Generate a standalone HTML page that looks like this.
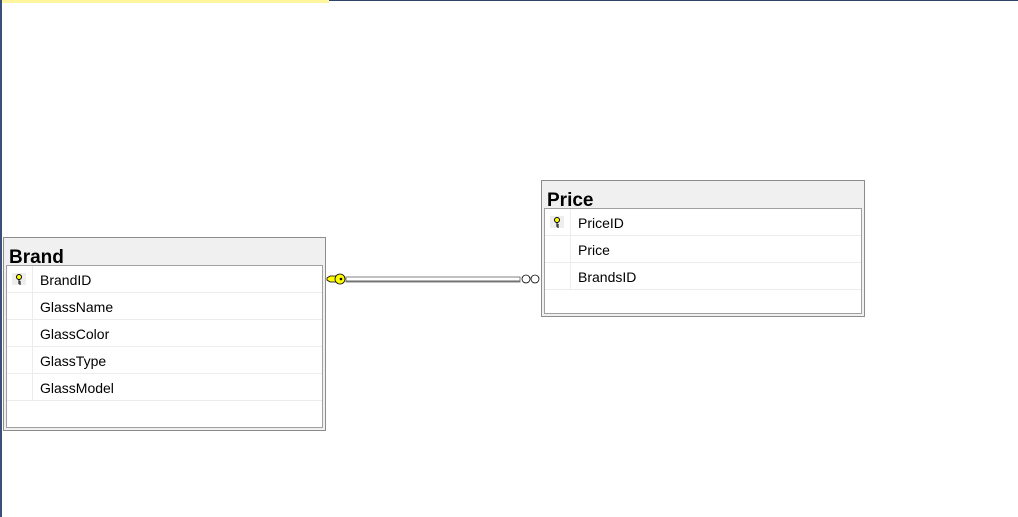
<!DOCTYPE html>
<html><head><style>
body{margin:0;width:1018px;height:517px;background:#fff;position:relative;overflow:hidden;font-family:"Segoe UI","Liberation Sans",sans-serif}
.tb{position:absolute;background:#f0f0f0;border:1px solid #8c8c8c;box-sizing:border-box}
.tt{position:absolute;left:5px;font-weight:bold;font-size:19px;color:#000}
.in{position:absolute;left:2px;right:2px;bottom:2px;background:#fff;border:1px solid #a0a0a0;box-sizing:border-box}
.r{height:27px;border-bottom:1px solid #ececec;box-sizing:border-box;position:relative;font-size:14px;line-height:28px}
.r .k{position:absolute;left:0;top:0;width:25px;height:26px;border-right:1px solid #ececec}
.r span{position:absolute;left:33px}
.key{position:absolute;left:5px;top:7px;width:14px;height:12px;background:#eee}
</style></head><body>
<div style="position:absolute;left:0;top:0;width:329px;height:3px;background:#fff59d"></div>
<div style="position:absolute;left:329px;top:0;width:689px;height:1px;background:#2e4468"></div>
<div style="position:absolute;left:0;top:0;width:2px;height:517px;background:#3a5078"></div>

<div class="tb" style="left:3px;top:237px;width:323px;height:194px">
<div class="tt" style="top:9px">Brand</div>
<div class="in" style="top:27px">
<div class="r"><div class="k"><div class="key"></div><svg style="position:absolute;left:8px;top:8px" width="8" height="11"><circle cx="4" cy="3" r="2.5" fill="#ff0" stroke="#000"/><path d="M4 5V10M4 8H6M4 10H6" stroke="#000"/></svg></div><span>BrandID</span></div>
<div class="r"><div class="k"></div><span>GlassName</span></div>
<div class="r"><div class="k"></div><span>GlassColor</span></div>
<div class="r"><div class="k"></div><span>GlassType</span></div>
<div class="r"><div class="k"></div><span>GlassModel</span></div>
</div></div>

<div class="tb" style="left:541px;top:180px;width:324px;height:137px">
<div class="tt" style="top:9px">Price</div>
<div class="in" style="top:27px">
<div class="r"><div class="k"><div class="key"></div><svg style="position:absolute;left:8px;top:8px" width="8" height="11"><circle cx="4" cy="3" r="2.5" fill="#ff0" stroke="#000"/><path d="M4 5V10M4 8H6M4 10H6" stroke="#000"/></svg></div><span>PriceID</span></div>
<div class="r"><div class="k"></div><span>Price</span></div>
<div class="r"><div class="k"></div><span>BrandsID</span></div>
</div></div>

<svg style="position:absolute;left:0;top:0" width="1018" height="517">
<rect x="346" y="277" width="174" height="5" fill="#fff" stroke="#808080" stroke-width="1"/>
<line x1="346" y1="281" x2="520" y2="281" stroke="#666"/>
<path d="M327 278 L330 276 L336 276 L336 282 L330 282 L327 280 Z" fill="#ff0" stroke="#000" stroke-width=".8"/>
<circle cx="340" cy="279" r="5" fill="#ff0" stroke="#000" stroke-width=".8"/>
<circle cx="341" cy="279" r="1.3" fill="#000"/>
<circle cx="526" cy="279" r="4" fill="#fff" stroke="#000" stroke-width=".8"/>
<circle cx="535" cy="279" r="4" fill="#fff" stroke="#000" stroke-width=".8"/>
</svg>
</body></html>
